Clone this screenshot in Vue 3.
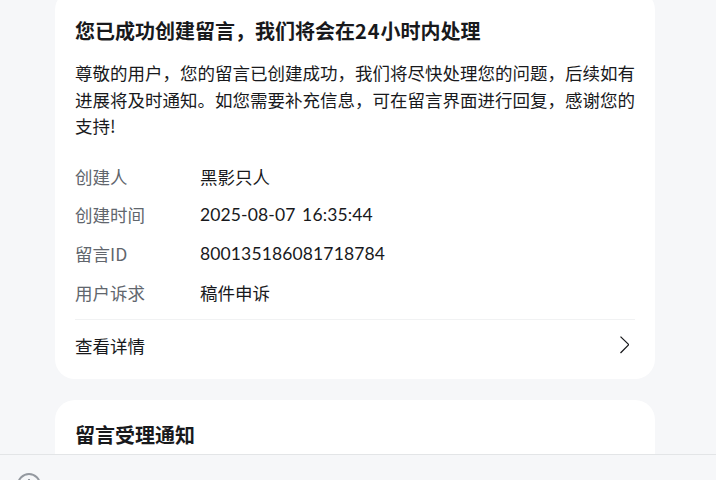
<script setup>
const rows = [
  { label: '创建人', value: '黑影只人' },
  { label: '创建时间', value: '2025-08-07 16:35:44', latin: true },
  { label: '留言ID', value: '800135186081718784', latin: true },
  { label: '用户诉求', value: '稿件申诉' },
]
</script>

<template>
  <div class="page">
    <div class="scroll">
      <section class="card first">
        <h2 class="title">您已成功创建留言，我们将会在<span class="num">24</span>小时内处理</h2>
        <p class="body">尊敬的用户，您的留言已创建成功，我们将尽快处理您的问题，后续如有进展将及时通知。如您需要补充信息，可在留言界面进行回复，感谢您的支持!</p>
        <div class="rows">
          <div v-for="r in rows" :key="r.label" class="row">
            <span class="label">{{ r.label }}</span>
            <span class="value" :class="{ latin: r.latin }">{{ r.value }}</span>
          </div>
        </div>
        <div class="detail">
          <span class="detail-text">查看详情</span>
          <svg class="chevron" width="10" height="20" viewBox="0 0 10 20" fill="none" stroke="#18191c" stroke-width="1.3"><path d="M1.5 1.6 9.8 9.6 1.5 18"/></svg>
        </div>
      </section>
      <section class="card second">
        <h2 class="title">留言受理通知</h2>
      </section>
    </div>
    <div class="bottom">
      <svg width="24" height="24" viewBox="0 0 24 24" fill="none" stroke="#9499a0" stroke-width="2">
        <circle cx="12" cy="12" r="11"/>
        <path d="M12 6v1.6"/>
      </svg>
    </div>
  </div>
</template>

<style scoped>
.page {
  width: 716px;
  height: 480px;
  overflow: hidden;
  background: #f6f7f9;
  display: flex;
  flex-direction: column;
  font-family: "Noto Sans CJK SC", "Liberation Sans", sans-serif;
  color: #18191c;
}
.scroll {
  flex: 1;
  min-height: 0;
  overflow: hidden;
  padding: 0 61px 0 55px;
}
.card {
  background: #fff;
  border-radius: 20px;
  padding: 0 20px;
}
.first {
  margin-top: -10px;
  height: 389px;
  padding-top: 27px;
  box-sizing: border-box;
}
.second {
  margin-top: 21px;
  padding-top: 21px;
  height: 80px;
}
.title {
  margin: 0;
  font-size: 20px;
  line-height: 28px;
  font-weight: 700;
}
.num { letter-spacing: 1px; }
.body {
  margin: 15px 0 0;
  font-size: 17.5px;
  line-height: 26.5px;
}
.rows { margin-top: 17.5px; }
.row {
  display: flex;
  height: 38.67px;
  align-items: center;
  font-size: 17.5px;
}
.label { width: 125px; color: #61666d; }
.latin { font-family: Lato, "Noto Sans CJK SC", sans-serif; letter-spacing: 0.13px; word-spacing: 2px; }
.detail {
  border-top: 1px solid #f1f2f3;
  margin-top: 7px;
  height: 50px;
  display: flex;
  justify-content: space-between;
  align-items: center;
  font-size: 17.5px;
}
.detail-text { padding-top: 2px; }
.chevron { margin-right: 6px; }
.bottom {
  height: 26px;
  flex: none;
  background: #f6f7f9;
  border-top: 1px solid #e3e5e7;
  box-sizing: border-box;
  padding: 18px 0 0 17px;
}
.bottom svg { display: block; }
</style>
